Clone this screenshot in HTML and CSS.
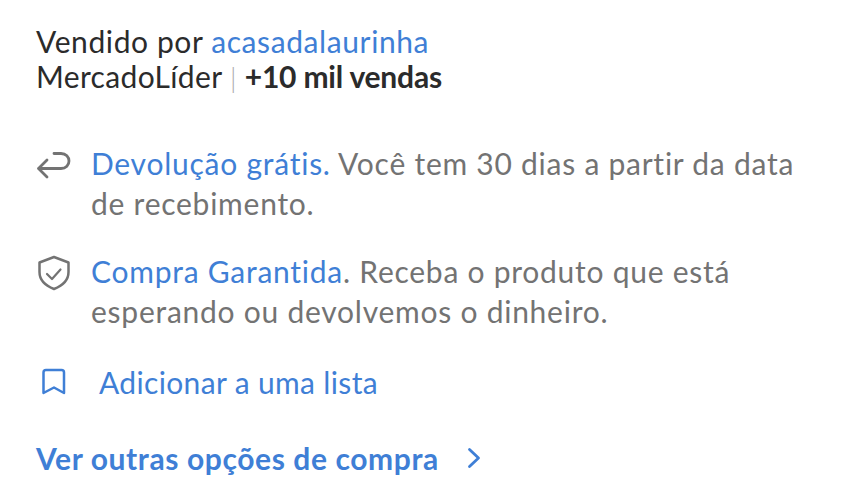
FILE: index.html
```html
<!DOCTYPE html>
<html lang="pt-BR">
<head>
    <meta charset="UTF-8">
    <meta name="viewport" content="width=device-width, initial-scale=1.0">
    <title>Vendido por acasadalaurinha</title>
    <link rel="stylesheet" href="styles.css">
</head>
<body>
    <div class="seller">
        <p>Vendido por <a href="#">acasadalaurinha</a></p>
        <p class="seller-status">MercadoLíder <span class="divider">|</span> <strong>+10 mil vendas</strong></p>
    </div>

    <div class="benefit benefit-return">
        <svg class="icon" width="36" height="30" viewBox="0 0 36 30">
            <path d="M18 3.500H25C30 3.500 33 7 33 11C33 15 30 18.500 25 18.500H3" fill="none" stroke="#737373" stroke-width="2.800" stroke-linecap="round" stroke-linejoin="round"/>
            <path d="M11 10L2.500 18.500L11 27" fill="none" stroke="#737373" stroke-width="2.800" stroke-linecap="round" stroke-linejoin="round"/>
        </svg>
        <p><a href="#">Devolução grátis.</a> Você tem 30 dias a partir da data de recebimento.</p>
    </div>

    <div class="benefit benefit-shield">
        <svg class="icon" width="36" height="36" viewBox="0 0 36 36">
            <path d="M18 2L32.500 7.500V17C32.500 24.500 27 30.500 18 34C9 30.500 3.500 24.500 3.500 17V7.500Z" fill="none" stroke="#737373" stroke-width="2.500" stroke-linejoin="round"/>
            <path d="M11 19L16 24L24.500 14.500" fill="none" stroke="#737373" stroke-width="2.200" stroke-linecap="round" stroke-linejoin="round"/>
        </svg>
        <p><a href="#">Compra Garantida</a>. Receba o produto que está esperando ou devolvemos o dinheiro.</p>
    </div>

    <a class="add-list" href="#">
        <svg class="icon" width="36" height="28" viewBox="0 0 36 28">
            <path d="M7.500 4.500C7.500 3 8.500 2 10 2H25.500C27 2 28 3 28 4.500V25L18 19.500L7.500 25Z" fill="none" stroke="#3f7fd6" stroke-width="2.500" stroke-linejoin="round"/>
        </svg>
        <span>Adicionar a uma lista</span>
    </a>

    <a class="more-options" href="#">
        <span>Ver outras opções de compra</span>
        <svg width="14" height="22" viewBox="0 0 14 22">
            <path d="M2.500 2.500L11.500 11L2.500 19.500" fill="none" stroke="#3f7fd6" stroke-width="2.800" stroke-linecap="round" stroke-linejoin="round"/>
        </svg>
    </a>
</body>
</html>
```

FILE: styles.css
```css
body {
    font-family: Lato, "Open Sans", sans-serif;
    margin: 0;
    padding: 24px 36px 0;
    background: #ffffff;
    color: #737373;
    font-size: 30px;
    letter-spacing: 0.6px;
}

p {
    margin: 0;
}

a {
    color: #3f7fd6;
    text-decoration: none;
}

.seller {
    color: #2b2b2b;
    line-height: 35px;
    margin-bottom: 48px;
}

.seller-status {
    letter-spacing: 0.35px;
}

.seller-status strong {
    font-weight: 700;
    letter-spacing: -0.2px;
}

.divider {
    color: #aaaaaa;
    font-size: 27px;
    font-weight: 300;
}

.benefit {
    display: flex;
    gap: 19px;
    line-height: 40px;
    letter-spacing: 0.75px;
    max-width: 760px;
}

.benefit-return {
    margin-bottom: 28px;
}

.benefit-return .icon {
    margin-top: 7px;
    flex-shrink: 0;
}

.benefit-shield .icon {
    margin-top: 4px;
    flex-shrink: 0;
}

.add-list {
    display: flex;
    align-items: center;
    gap: 27px;
    margin-top: 31px;
    line-height: 40px;
    letter-spacing: 0.35px;
}

.more-options {
    display: flex;
    align-items: center;
    gap: 28px;
    margin-top: 36px;
    font-weight: 700;
    line-height: 40px;
}
```
